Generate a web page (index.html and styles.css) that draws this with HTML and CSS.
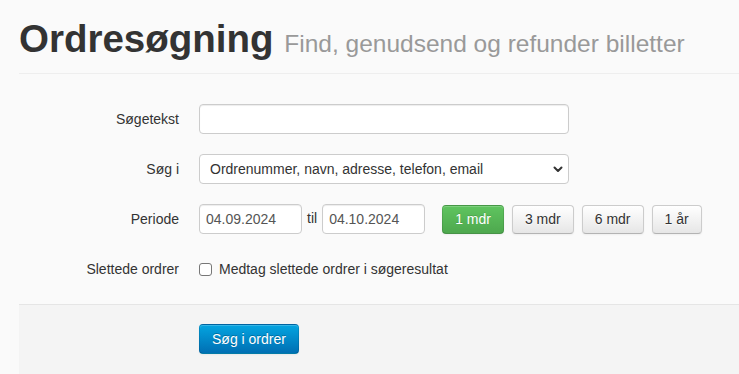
FILE: index.html
```html
<!DOCTYPE html>
<html>
<head>
    <meta charset="utf-8"/>
    <title>Ordresøgning</title>
    <link rel="stylesheet" href="styles.css">
</head>
<body>
<div class="page">

    <div class="page-header">
        <h1>Ordresøgning <small>Find, genudsend og refunder billetter</small></h1>
    </div>

    <form class="form-horizontal" name="searchform">

        <div class="control-group">
            <label class="control-label" for="query">Søgetekst</label>
            <div class="controls">
                <input type="text" class="input-wide" id="query" name="query">
            </div>
        </div>

        <div class="control-group">
            <label class="control-label" for="field">Søg i</label>
            <div class="controls">
                <div class="select-wrap">
                    <select class="input-wide" id="field" name="field">
                        <option>Ordrenummer, navn, adresse, telefon, email</option>
                    </select>
                    <svg class="chevron" width="10" height="7" viewBox="0 0 10 7">
                        <path d="M1.5 1.5 L5 5 L8.5 1.5" fill="none" stroke="#333" stroke-width="2" stroke-linecap="round" stroke-linejoin="round"/>
                    </svg>
                </div>
            </div>
        </div>

        <div class="control-group">
            <label class="control-label" for="from">Periode</label>
            <div class="controls period">
                <input type="text" class="input-date" id="from" name="from" value="04.09.2024">
                <span class="til">til</span>
                <input type="text" class="input-date" id="to" name="to" value="04.10.2024">
                <div class="ranges">
                    <button type="button" class="btn btn-success">1 mdr</button>
                    <button type="button" class="btn">3 mdr</button>
                    <button type="button" class="btn">6 mdr</button>
                    <button type="button" class="btn">1 år</button>
                </div>
            </div>
        </div>

        <div class="control-group">
            <span class="control-label">Slettede ordrer</span>
            <div class="controls">
                <label class="checkbox">
                    <input type="checkbox" name="deleted">
                    Medtag slettede ordrer i søgeresultat
                </label>
            </div>
        </div>

        <div class="form-actions">
            <button type="button" class="btn btn-search">Søg i ordrer</button>
        </div>

    </form>
</div>
</body>
</html>
```

FILE: styles.css
```css
body {
    margin: 0;
    background: #fafafa;
    font-family: "Liberation Sans", Arial, sans-serif;
    font-size: 14px;
    line-height: 20px;
    color: #333;
}

.page {
    padding-left: 19px;
    overflow: hidden;
}

.page-header {
    margin: 19px 0 30px;
    padding-bottom: 9px;
    border-bottom: 1px solid #eee;
}

.page-header h1 {
    margin: 0;
    font-size: 38.5px;
    line-height: 40px;
    font-weight: bold;
    color: #333;
}

.page-header h1 small {
    font-size: 24.5px;
    font-weight: normal;
    color: #999;
}

.control-group {
    display: flex;
    align-items: flex-start;
    margin-bottom: 20px;
}

.control-label {
    width: 160px;
    margin-right: 20px;
    padding-top: 5px;
    text-align: right;
}

input[type=text], select {
    box-sizing: border-box;
    height: 30px;
    margin: 0;
    padding: 4px 6px;
    font-family: inherit;
    font-size: 14px;
    line-height: 20px;
    color: #555;
    background: #fff;
    border: 1px solid #ccc;
    border-radius: 4px;
    box-shadow: inset 0 1px 1px rgba(0, 0, 0, 0.075);
    outline: none;
}

.input-wide {
    width: 370px;
}

.select-wrap {
    position: relative;
}

select {
    appearance: none;
    -webkit-appearance: none;
    padding-left: 10px;
    color: #333;
    box-shadow: none;
}

.chevron {
    position: absolute;
    right: 6px;
    top: 12px;
}

.period {
    display: flex;
    align-items: flex-start;
}

.input-date {
    width: 103px;
    color: #333;
}

.til {
    padding: 4px 5px 0 5px;
}

.ranges {
    display: flex;
    gap: 8px;
    margin-left: 17px;
}

.btn {
    box-sizing: border-box;
    height: 29px;
    margin-top: 1px;
    padding: 4px 12px;
    font-family: inherit;
    font-size: 14px;
    line-height: 19px;
    color: #333;
    text-shadow: 0 1px 1px rgba(255, 255, 255, 0.75);
    background: linear-gradient(#ffffff, #e6e6e6);
    border: 1px solid #ccc;
    border-bottom-color: #b3b3b3;
    border-radius: 4px;
    box-shadow: inset 0 1px 0 rgba(255, 255, 255, 0.2), 0 1px 2px rgba(0, 0, 0, 0.05);
}

.btn-success {
    color: #fff;
    text-shadow: 0 -1px 0 rgba(0, 0, 0, 0.15);
    background: linear-gradient(#5fc45f, #4ea84e);
    border-color: rgba(0, 0, 0, 0.1) rgba(0, 0, 0, 0.1) rgba(0, 0, 0, 0.25);
}

.checkbox {
    display: flex;
    align-items: center;
    padding-top: 5px;
}

.checkbox input {
    appearance: none;
    -webkit-appearance: none;
    width: 13px;
    height: 13px;
    margin: 0 7px 0 0;
    background: #fff;
    border: 1px solid #777;
    border-radius: 3px;
}

.form-actions {
    margin-top: 25px;
    padding: 19px 20px 24px 180px;
    background: #f4f4f4;
    border-top: 1px solid #e5e5e5;
}

.btn-search {
    height: 30px;
    margin-top: 0;
    line-height: 20px;
    color: #fff;
    text-shadow: 0 -1px 0 rgba(0, 0, 0, 0.25);
    background: linear-gradient(#04a4e0, #006fb3);
    border-color: rgba(0, 0, 0, 0.1) rgba(0, 0, 0, 0.1) rgba(0, 0, 0, 0.25);
}
```
